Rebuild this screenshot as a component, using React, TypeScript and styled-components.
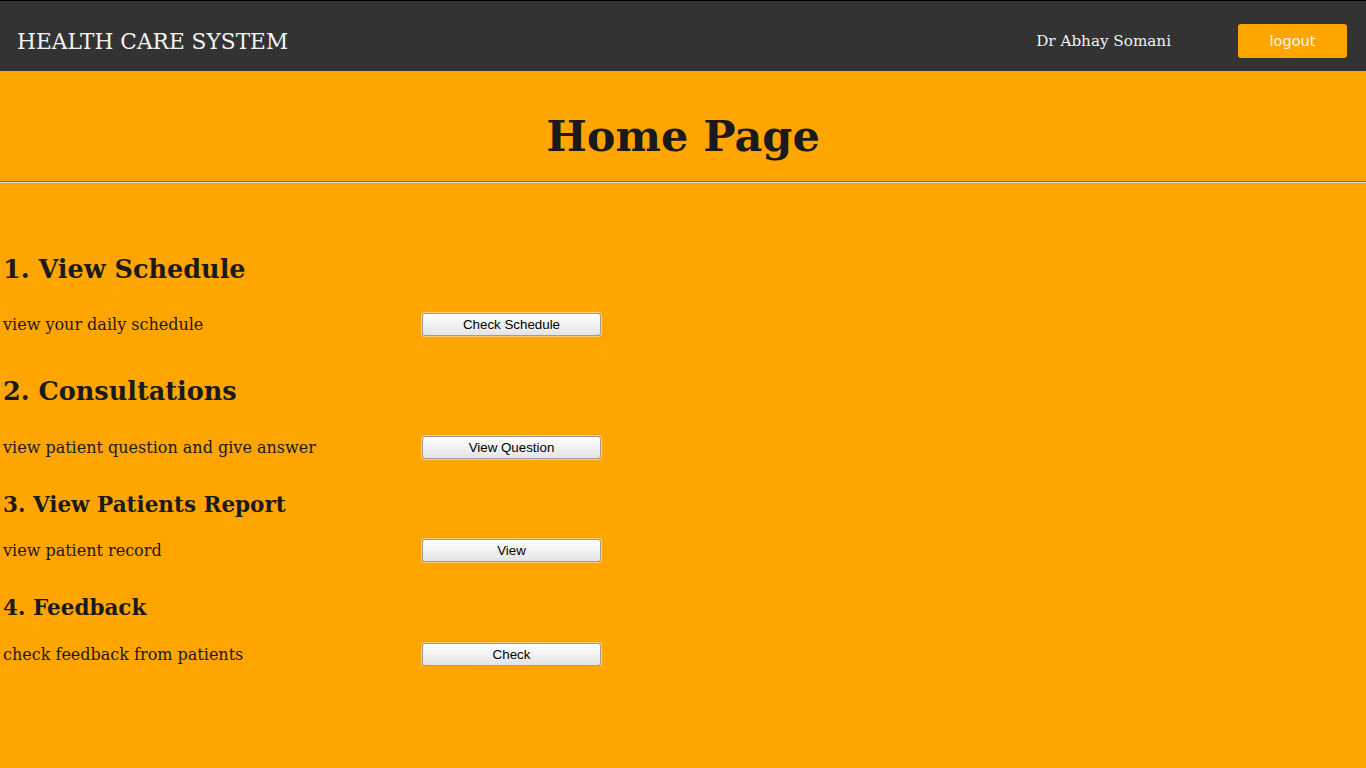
import styled, { createGlobalStyle } from "styled-components";

const GlobalStyle = createGlobalStyle`
    html, body {
        margin: 0;
        padding: 0;
        background: #ffa500;
    }
    body {
        font-family: "DejaVu Serif", serif;
        color: #1a1a1a;
    }
`;

const NavBar = styled.header`
    box-sizing: border-box;
    display: flex;
    align-items: center;
    height: 71px;
    background: #333333;
    border-top: 1px solid #000;
    padding: 10px 19px 0 17px;
`;

const Brand = styled.div`
    font-family: "DejaVu Serif", serif;
    font-size: 21.7px;
    color: #f2f2f2;
    flex: 1;
`;

const UserName = styled.span`
    font-family: "DejaVu Serif", serif;
    font-size: 15.2px;
    color: #f2f2f2;
    margin-right: 67px;
`;

const LogoutButton = styled.button`
    width: 109px;
    height: 34px;
    background: #ffa500;
    border: none;
    border-radius: 3px;
    color: #f7f7f7;
    font-family: "DejaVu Sans", sans-serif;
    font-size: 14.5px;
    cursor: pointer;
`;

const TitleBlock = styled.div`
    padding: 40px 0 20px;
    text-align: center;
`;

const Title = styled.h1`
    margin: 0;
    font-size: 43px;
    line-height: 50px;
    font-weight: bold;
`;

const Rule = styled.hr`
    margin: 0;
    border: none;
    border-top: 1px solid #6f6f6f;
    border-bottom: 1px solid #d8d8d8;
`;

const Content = styled.main`
    padding-left: 3px;
`;

const Heading = styled.h2<{ $size: number; $top: number; $bottom: number }>`
    margin: ${(p) => p.$top}px 0 ${(p) => p.$bottom}px;
    font-size: ${(p) => p.$size}px;
    line-height: ${(p) => Math.round(p.$size * 1.2)}px;
    font-weight: bold;
`;

const Row = styled.div`
    display: grid;
    grid-template-columns: 419px 179px;
    align-items: center;
    height: 24px;
`;

const Label = styled.span`
    font-size: 16px;
`;

const ActionButton = styled.button`
    height: 23px;
    padding: 0;
    border: 1px solid #9c9c9c;
    border-radius: 3px;
    background: linear-gradient(#ffffff, #e4e4e4);
    box-shadow: 0 0 0 1px rgba(255, 255, 255, 0.45);
    font-family: "Liberation Sans", Arial, sans-serif;
    font-size: 13.33px;
    color: #000;
    cursor: pointer;
`;

const sections = [
    { title: "1. View Schedule", text: "view your daily schedule", button: "Check Schedule", size: 25.5, top: 71, bottom: 27 },
    { title: "2. Consultations", text: "view patient question and give answer", button: "View Question", size: 25.5, top: 40, bottom: 28 },
    { title: "3. View Patients Report", text: "view patient record", button: "View", size: 21.5, top: 33, bottom: 20 },
    { title: "4. Feedback", text: "check feedback from patients", button: "Check", size: 21.5, top: 33, bottom: 21 },
];

export default function App() {
    return (
        <>
            <GlobalStyle />
            <NavBar>
                <Brand>HEALTH CARE SYSTEM</Brand>
                <UserName>Dr Abhay Somani</UserName>
                <LogoutButton>logout</LogoutButton>
            </NavBar>
            <TitleBlock>
                <Title>Home Page</Title>
            </TitleBlock>
            <Rule />
            <Content>
                {sections.map((s) => (
                    <section key={s.title}>
                        <Heading $size={s.size} $top={s.top} $bottom={s.bottom}>{s.title}</Heading>
                        <Row>
                            <Label>{s.text}</Label>
                            <ActionButton>{s.button}</ActionButton>
                        </Row>
                    </section>
                ))}
            </Content>
        </>
    );
}
